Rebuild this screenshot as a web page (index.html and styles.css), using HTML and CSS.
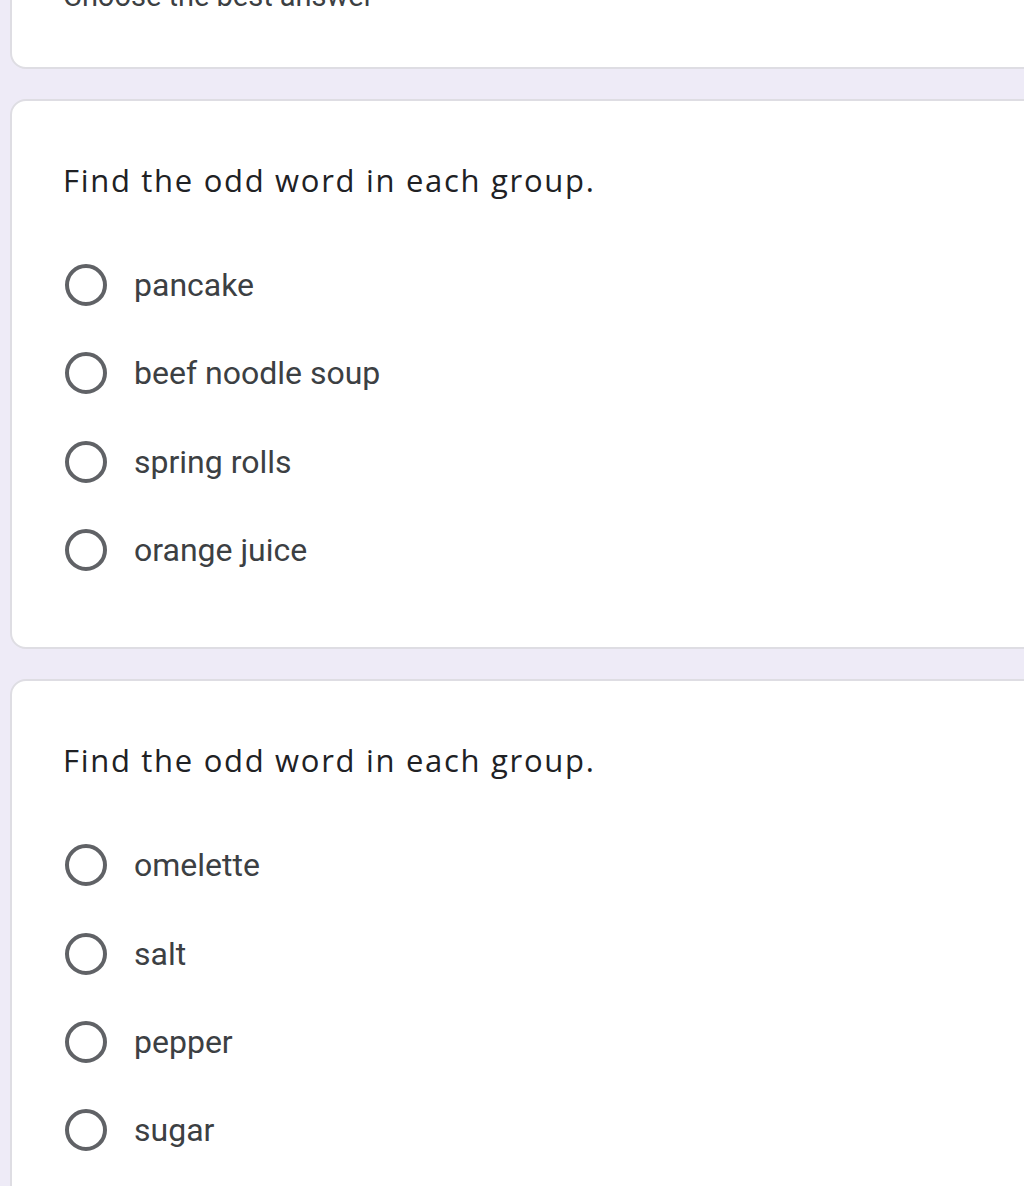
FILE: index.html
```html
<!DOCTYPE html>
<html>
<head>
<meta charset="utf-8">
<link rel="stylesheet" href="styles.css">
</head>
<body>
<div class="page">
  <div class="card card-top">
    <div class="desc">Choose the best answer</div>
  </div>
  <div class="card">
    <div class="title">Find the odd word in each group.</div>
    <div class="options">
      <div class="option"><span class="radio"></span><span class="label">pancake</span></div>
      <div class="option"><span class="radio"></span><span class="label">beef noodle soup</span></div>
      <div class="option"><span class="radio"></span><span class="label">spring rolls</span></div>
      <div class="option"><span class="radio"></span><span class="label">orange juice</span></div>
    </div>
  </div>
  <div class="card">
    <div class="title">Find the odd word in each group.</div>
    <div class="options">
      <div class="option"><span class="radio"></span><span class="label">omelette</span></div>
      <div class="option"><span class="radio"></span><span class="label">salt</span></div>
      <div class="option"><span class="radio"></span><span class="label">pepper</span></div>
      <div class="option"><span class="radio"></span><span class="label">sugar</span></div>
    </div>
  </div>
</div>
</body>
</html>
```
FILE: styles.css
```css
html, body {
  margin: 0;
  padding: 0;
  background: #eeebf7;
  overflow: hidden;
  height: 1186px;
}
.page {
  padding-left: 10px;
  display: flex;
  flex-direction: column;
  gap: 30px;
}
.card {
  background: #ffffff;
  border: 2px solid #dedde3;
  border-radius: 16px;
  width: 1060px;
  box-sizing: border-box;
  padding: 0 0 0 51px;
}
.card-top {
  margin-top: -60px;
  height: 129px;
  padding-top: 34px;
}
.desc {
  font-family: Roboto, "Liberation Sans", sans-serif;
  font-size: 29px;
  line-height: 40px;
  color: #3c4043;
}
.card:not(.card-top) {
  padding-top: 55px;
  padding-bottom: 53px;
}
.title {
  font-family: "Open Sans", "Liberation Sans", sans-serif;
  font-size: 31px;
  line-height: 48px;
  color: #202124;
  letter-spacing: 1.7px;
}
.options {
  margin-top: 37px;
  display: flex;
  flex-direction: column;
}
.option {
  height: 88.3px;
  display: flex;
  align-items: center;
}
.radio {
  width: 42px;
  height: 42px;
  box-sizing: border-box;
  border: 4px solid #606266;
  border-radius: 50%;
  flex: none;
  margin-left: 2px;
}
.label {
  margin-left: 27px;
  font-family: Roboto, "Liberation Sans", sans-serif;
  font-size: 32px;
  color: #3c4043;
}
```
